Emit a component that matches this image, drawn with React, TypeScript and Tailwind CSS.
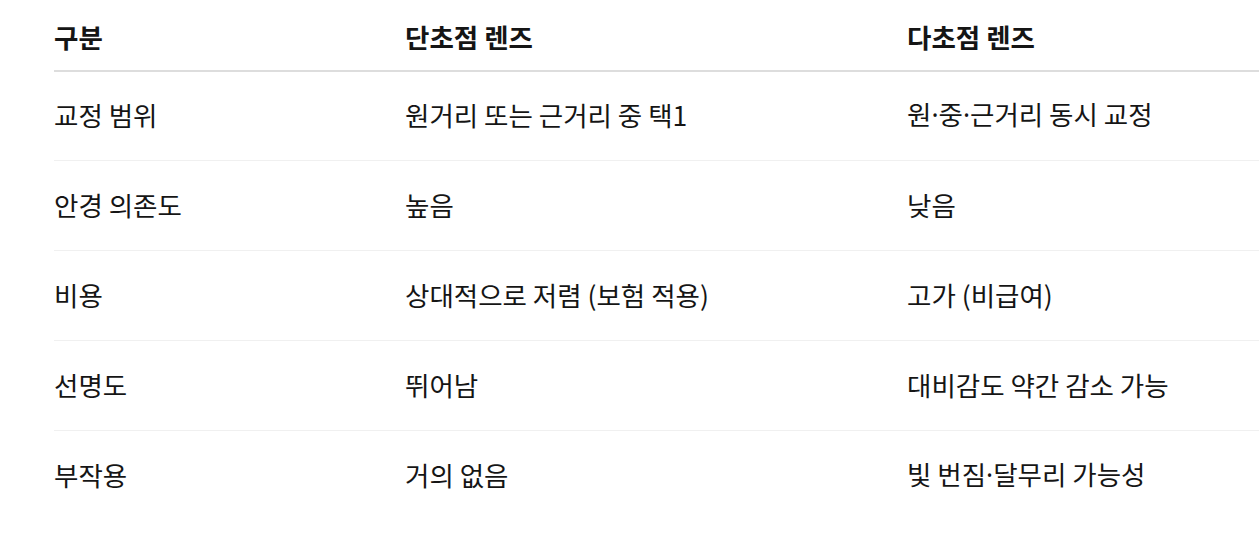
import React from "react";

const Dot = () => (
  <span style={{ fontFamily: '"Noto Sans", sans-serif' }}>·</span>
);

const rows: [React.ReactNode, React.ReactNode, React.ReactNode][] = [
  [
    "교정 범위",
    "원거리 또는 근거리 중 택1",
    <>
      원<Dot />중<Dot />근거리 동시 교정
    </>,
  ],
  ["안경 의존도", "높음", "낮음"],
  ["비용", "상대적으로 저렴 (보험 적용)", "고가 (비급여)"],
  ["선명도", "뛰어남", "대비감도 약간 감소 가능"],
  [
    "부작용",
    "거의 없음",
    <>
      빛 번짐<Dot />달무리 가능성
    </>,
  ],
];

export default function App() {
  return (
    <div
      className="w-[1259px] h-[543px] overflow-hidden bg-white text-[#151515]"
      style={{ fontFamily: '"Noto Sans CJK KR", "Noto Sans", sans-serif' }}
    >
      <div className="pl-[54px] w-[1400px]">
        <div className="grid grid-cols-[351px_502px_1fr] h-[72px] items-center border-b-2 border-[#dddddd] text-[26.5px] font-bold pt-[4px]">
          <div>구분</div>
          <div>단초점 렌즈</div>
          <div>다초점 렌즈</div>
        </div>
        {rows.map((r, i) => (
          <div
            key={i}
            className={`grid grid-cols-[351px_502px_1fr] items-center text-[26.5px] pb-[2px] ${
              i === 0 ? "h-[89px]" : "h-[90px]"
            } ${i < rows.length - 1 ? "border-b border-[#f0f0f0]" : ""}`}
          >
            <div>{r[0]}</div>
            <div>{r[1]}</div>
            <div>{r[2]}</div>
          </div>
        ))}
      </div>
    </div>
  );
}
